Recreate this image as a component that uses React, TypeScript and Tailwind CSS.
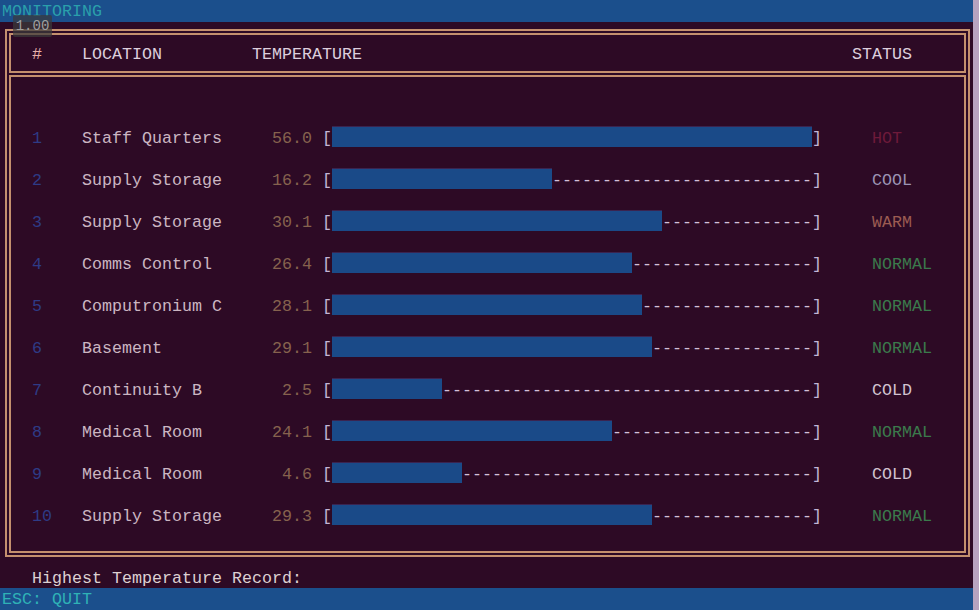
import React from 'react';

type Row = { id: number; location: string; temp: number; cells: number; status: string };

const rows: Row[] = [
  { id: 1, location: 'Staff Quarters', temp: 56.0, cells: 48, status: 'HOT' },
  { id: 2, location: 'Supply Storage', temp: 16.2, cells: 22, status: 'COOL' },
  { id: 3, location: 'Supply Storage', temp: 30.1, cells: 33, status: 'WARM' },
  { id: 4, location: 'Comms Control', temp: 26.4, cells: 30, status: 'NORMAL' },
  { id: 5, location: 'Computronium C', temp: 28.1, cells: 31, status: 'NORMAL' },
  { id: 6, location: 'Basement', temp: 29.1, cells: 32, status: 'NORMAL' },
  { id: 7, location: 'Continuity B', temp: 2.5, cells: 11, status: 'COLD' },
  { id: 8, location: 'Medical Room', temp: 24.1, cells: 28, status: 'NORMAL' },
  { id: 9, location: 'Medical Room', temp: 4.6, cells: 13, status: 'COLD' },
  { id: 10, location: 'Supply Storage', temp: 29.3, cells: 32, status: 'NORMAL' },
];

const statusColor: Record<string, string> = {
  HOT: 'text-[#6e1a3a]',
  COOL: 'text-[#9c94b4]',
  WARM: 'text-[#9c5c52]',
  NORMAL: 'text-[#3b7a4c]',
  COLD: 'text-[#d2c3d0]',
};

// the terminal draws each row as one text line with a full-height bar
const TempRow = ({ row }: { row: Row }) => (
  <div className="flex h-[21px] items-start whitespace-pre leading-[25px]">
    <span className="w-[50px] text-[#2e3b86]">{row.id}</span>
    <span className="w-[170px] text-[#cbb6c2]">{row.location}</span>
    <span className="w-[60px] text-right text-[#86624e]">{row.temp.toFixed(1)}</span>
    <span className="ml-[10px] w-[10px] text-[#c2b6d6]">[</span>
    <div className="flex h-[21px] w-[480px] items-start">
      <div className="h-[21px] border-t border-[#3a2450] bg-[#1a4a88]" style={{ width: row.cells * 10 }} />
      <span className="text-[#d2c0d8]">{'-'.repeat(48 - row.cells)}</span>
    </div>
    <span className="w-[10px] text-[#c2b6d6]">]</span>
    <span className={`ml-[50px] ${statusColor[row.status]}`}>{row.status}</span>
  </div>
);

export default function App() {
  return (
    <div className="flex h-[610px] w-[979px] overflow-hidden bg-[#2d0a25] font-['Courier_New','Nimbus_Mono_PS','FreeMono','Liberation_Mono',monospace] text-[16.67px] leading-[21px]">
      <div className="relative flex w-[973px] flex-col">
        <div className="h-[22px] bg-[#1b4f8c] pl-[2px] leading-[24px] text-[#2a9fab]">MONITORING</div>
        <div className="absolute left-[13px] top-[15px] flex h-[22px] w-[39px] items-center justify-center rounded-[2px] bg-[#3a3a3a]/70 text-[14px] text-[#9f9f9f]">
          1.00
        </div>

        <div className="ml-[5px] mt-[7px] flex h-[528px] w-[965px] flex-col gap-[2px] border-2 border-[#c4906e] p-[2px]">
          <div className="flex h-[40px] items-center whitespace-pre border-2 border-[#c4906e] pl-[21px] pt-[2px] text-[#ddcfdd]">
            <span className="w-[50px] text-[#e8b0a8]">#</span>
            <span className="w-[170px]">LOCATION</span>
            <span className="w-[600px]">TEMPERATURE</span>
            <span>STATUS</span>
          </div>
          <div className="flex flex-1 flex-col gap-[21px] border-2 border-[#c4906e] pl-[21px] pt-[49px]">
            {rows.map((row) => (
              <TempRow key={row.id} row={row} />
            ))}
          </div>
        </div>

        <div className="mt-[10px] h-[21px] pl-[32px] leading-[24px] text-[#ddd0d2]">Highest Temperature Record:</div>
        <div className="h-[22px] bg-[#1b4f8c] pl-[2px] leading-[24px] text-[#2fb2b6]">ESC: QUIT</div>
      </div>
      <div className="w-[6px] bg-[#b8a3bf]" />
    </div>
  );
}
